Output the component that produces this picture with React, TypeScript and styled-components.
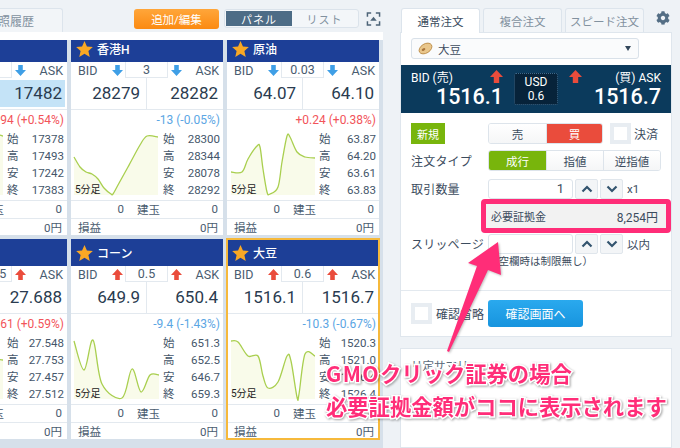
import React from 'react'
import styled,{createGlobalStyle} from 'styled-components'
import {FaCog} from 'react-icons/fa'

const FONT=`Roboto,"Noto Sans CJK JP",sans-serif`
const PINK='#ff2d78'
const TEXT='#34465a'
const LINE='#e3e9ef'
const RED='#ea4c3c'
const BLUE='#3f9fe6'
const GREEN='#78b50c'

type Pt=[number,number]

interface ICardData{
    name:string;
    dir:'up'|'down';
    spread:string;
    bid:string;
    ask:string;
    change:string;
    rising:boolean;
    ohlc:string[];
    points:Pt[];
    highlight?:boolean;
    selected?:boolean;
}

const CARDS:ICardData[]=[
    {name:'日本225',dir:'down',spread:'3',bid:'17479',ask:'17482',change:'+94 (+0.54%)',rising:true,ohlc:['17378','17493','17242','17383'],points:[[3,40],[30,50],[60,30],[80,6],[88,5]],highlight:true},
    {name:'香港H',dir:'down',spread:'3',bid:'28279',ask:'28282',change:'-13 (-0.05%)',rising:false,ohlc:['28300','28344','28078','28292'],points:[[3,26],[9,36],[15,41],[21,43],[27,48],[33,57],[40,63],[42,63],[47,54],[57,36],[69,14],[76,5],[87,6]]},
    {name:'原油',dir:'down',spread:'0.03',bid:'64.07',ask:'64.10',change:'+0.24 (+0.38%)',rising:true,ohlc:['63.87','64.20','63.61','63.83'],points:[[4,41],[15,41],[21,28],[30,15],[33,16],[36,38],[40,61],[43,63],[51,56],[55,31],[60,5],[63,6],[70,21],[78,26],[88,27]]},
    {name:'金',dir:'up',spread:'0.005',bid:'27.683',ask:'27.688',change:'+0.161 (+0.59%)',rising:true,ohlc:['27.548','27.753','27.457','27.512'],points:[[3,50],[30,45],[60,40],[80,26],[88,25]]},
    {name:'コーン',dir:'up',spread:'0.5',bid:'649.9',ask:'650.4',change:'-9.4 (-1.43%)',rising:false,ohlc:['651.3','652.5','646.7','659.3'],points:[[3,6],[13,35],[22,5],[31,49],[51,63],[61,34],[70,57],[79,40],[88,40]]},
    {name:'大豆',dir:'up',spread:'0.6',bid:'1516.1',ask:'1516.7',change:'-10.3 (-0.67%)',rising:false,ohlc:['1520.3','1521.0','1526.4','1526.4'],points:[[4,6],[11,7],[21,21],[31,21],[36,41],[41,53],[51,47],[60,21],[64,26],[70,62],[72,59],[78,19],[88,21]],selected:true},
]

const OHLC_LABELS=['始','高','安','終']

/**
 * turns chart points into a smooth svg path
 */
const smoothPath=(pts:Pt[]):string=>{
    let d=`M${pts[0][0]} ${pts[0][1]}`
    for(let i=0;i<pts.length-1;i++){
        const p0=pts[Math.max(i-1,0)]
        const p1=pts[i]
        const p2=pts[i+1]
        const p3=pts[Math.min(i+2,pts.length-1)]
        const c1x=p1[0]+(p2[0]-p0[0])/6
        const c1y=p1[1]+(p2[1]-p0[1])/6
        const c2x=p2[0]-(p3[0]-p1[0])/6
        const c2y=p2[1]-(p3[1]-p1[1])/6
        d+=` C${c1x} ${c1y} ${c2x} ${c2y} ${p2[0]} ${p2[1]}`
    }
    return d
}

const Global=createGlobalStyle`
html,body{margin:0;padding:0;background:#eef2f6;}
body{font-family:${FONT};color:${TEXT};}
*{box-sizing:border-box;}
svg{display:block;}
`

const Root=styled.div`
position:relative;
display:flex;
width:680px;
height:448px;
overflow:hidden;
background:#eef2f6;
`

const LeftColumn=styled.div`
display:flex;
flex-direction:column;
width:383px;
height:100%;
`

const Toolbar=styled.div`
display:flex;
align-items:flex-start;
height:32px;
padding-top:9px;
`

const HistoryTab=styled.div`
display:flex;
align-items:center;
justify-content:flex-end;
width:103px;
height:24px;
margin:-1px 0 0 -40px;
padding-right:28px;
font-size:12px;
color:#82919f;
white-space:nowrap;
background:#f2f5f8;
border:1px solid #dce4ec;
border-bottom:none;
border-radius:3px 3px 0 0;
`

const AddButton=styled.div`
display:flex;
align-items:center;
justify-content:center;
width:85px;
height:20px;
margin-left:71px;
font-size:11.5px;
color:#fff;
background:linear-gradient(#ffa63a,#fb8a12);
border-radius:3px;
`

const ViewToggle=styled.div`
display:flex;
width:135px;
height:19px;
margin-left:5px;
padding:1px;
background:#f3f6f9;
border:1px solid #dbe3eb;
border-radius:3px;
`

const ViewOption=styled.div<{$on?:boolean}>`
display:flex;
align-items:center;
justify-content:center;
flex:${({$on})=>$on?'0 0 66px':'1'};
font-size:11px;
letter-spacing:1px;
color:${({$on})=>$on?'#fff':'#82919f'};
background:${({$on})=>$on?'#4d6c86':'transparent'};
`

const ExpandIcon=styled.svg`
width:15px;
height:14px;
margin:3px 0 0 7px;
`

const WhiteStrip=styled.div`
height:8px;
background:#fff;
`

const CardPane=styled.div`
flex:1;
overflow:hidden;
background:#d6e0ea;
`

const CardGrid=styled.div`
display:grid;
grid-template-columns:repeat(3,152px);
grid-auto-rows:200px;
gap:4px;
margin:-5px 0 0 -85px;
`

const Card=styled.div<{$selected?:boolean}>`
display:flex;
flex-direction:column;
min-height:0;
background:#fff;
outline:${({$selected})=>$selected?'2px solid #f6b93b':'none'};
outline-offset:-1px;
`

const CardHeader=styled.div`
display:flex;
align-items:center;
gap:4px;
flex:0 0 27px;
padding-left:5px;
font-size:12px;
font-weight:500;
color:#fff;
background:#1d3f97;
`

const QuoteHead=styled.div`
display:grid;
grid-template-columns:31px 16px 43px 16px 1fr;
align-items:center;
flex:0 0 16px;
padding:0 4px 0 7px;
font-size:12.5px;
color:#4a5c70;
`

const ArrowSlot=styled.div`
display:flex;
justify-content:center;
`

const SpreadBox=styled.div`
height:16px;
font-size:12.5px;
line-height:15px;
text-align:center;
border:1px solid ${LINE};
border-top:none;
`

const AskLabel=styled.div`
text-align:right;
`

const PriceRow=styled.div`
display:grid;
grid-template-columns:76px 1fr;
flex:0 0 32px;
border-bottom:1px solid ${LINE};
`

const PriceCell=styled.div<{$lit?:boolean}>`
margin:2px 2px 2px 0;
padding-right:3px;
font-size:17px;
line-height:27px;
text-align:right;
color:#2a3b4f;
background:${({$lit})=>$lit?'#c4e3f7':'transparent'};
`

const PriceDivider=styled(PriceCell)`
margin:0;
padding-top:2px;
padding-right:6px;
border-right:1px solid ${LINE};
`

const ChartSection=styled.div`
display:flex;
flex-direction:column;
flex:0 0 91px;
padding:0 3px 0 0;
border-bottom:1px solid ${LINE};
`

const ChangeText=styled.div<{$rising:boolean}>`
flex:0 0 21px;
font-size:12px;
line-height:21px;
text-align:right;
white-space:nowrap;
color:${({$rising})=>$rising?'#f2545a':'#5ba6e4'};
`

const ChartBody=styled.div`
display:flex;
flex:1;
`

const ChartBox=styled.div`
position:relative;
flex:0 0 90px;
`

const TermLabel=styled.span`
position:absolute;
left:4px;
bottom:4px;
font-size:10px;
line-height:12px;
color:#222;
`

const OhlcList=styled.div`
flex:1;
padding-left:2px;
`

const OhlcRow=styled.div`
display:flex;
justify-content:space-between;
height:17px;
font-size:11.5px;
line-height:17px;
color:#44566a;
`

const FootRow=styled.div<{$tall?:boolean}>`
display:flex;
align-items:center;
justify-content:space-between;
flex:1;
padding:0 5px 0 7px;
font-size:11.5px;
color:#4a5c70;
border-bottom:${({$tall})=>$tall?'none':`1px solid ${LINE}`};
`

const PositionRow=styled(FootRow)`
display:grid;
grid-template-columns:46px 36px 1fr;
column-gap:0;
text-align:right;
`

const RightColumn=styled.div`
display:flex;
flex-direction:column;
width:272px;
margin-left:17px;
`

const TabBar=styled.div`
display:flex;
align-items:flex-end;
gap:3px;
height:32px;
padding-left:1px;
`

const OrderTab=styled.div<{$on?:boolean}>`
display:flex;
align-items:center;
justify-content:center;
width:79px;
height:${({$on})=>$on?'25px':'24px'};
font-size:11.5px;
white-space:nowrap;
color:${({$on})=>$on?'#3c4c5e':'#82919f'};
background:${({$on})=>$on?'#fff':'#f2f5f8'};
border:1px solid #dce4ec;
border-bottom:none;
border-radius:3px 3px 0 0;
margin-bottom:${({$on})=>$on?'-1px':'0'};
position:relative;
`

const GearSlot=styled.div`
align-self:flex-start;
margin:11px 0 0 9px;
font-size:14px;
line-height:14px;
color:#546e85;
`

const OrderPanel=styled.div`
display:flex;
flex-direction:column;
flex:0 0 305px;
background:#fff;
border:1px solid #dfe6ed;
`

const SelectBox=styled.div`
display:flex;
align-items:center;
gap:5px;
width:228px;
height:21px;
margin:5px 0 6px 10px;
padding:0 7px 0 6px;
font-size:11.5px;
color:#3c4c5e;
background:#fafbfc;
border:1px solid #d9e1e9;
border-radius:3px;
`

const SelectCaret=styled.span`
margin-left:auto;
width:0;
height:0;
border-left:3.5px solid transparent;
border-right:3.5px solid transparent;
border-top:5px solid #33475b;
`

const RateBand=styled.div`
display:grid;
grid-template-columns:1fr 44px 1fr;
gap:11px;
height:48px;
padding:3px 10px 0;
color:#fff;
background:#0b3a5c;
`

const RateSide=styled.div`
display:flex;
flex-direction:column;
`

const RateTop=styled.div`
display:flex;
align-items:center;
justify-content:space-between;
height:17px;
font-size:12px;
`

const RateValue=styled.div`
font-size:21.5px;
font-weight:500;
line-height:24px;
text-align:right;
`

const SpreadCard=styled.div`
display:flex;
flex-direction:column;
align-items:center;
justify-content:center;
height:32px;
margin-top:5px;
font-size:12px;
line-height:14px;
background:#07233a;
border:1px dotted #3e6a8c;
border-radius:2px;
`

const FormRow=styled.div<{$top:number}>`
display:flex;
align-items:center;
height:21px;
margin-top:${({$top})=>$top}px;
padding-left:10px;
font-size:12px;
color:#3c4c5e;
`

const RowLabel=styled.div`
flex:0 0 77px;
letter-spacing:.2px;
white-space:nowrap;
`

const NewBadge=styled.div`
display:flex;
align-items:center;
justify-content:center;
flex:0 0 34px;
height:21px;
margin-right:43px;
font-size:11px;
color:#fff;
background:${GREEN};
`

const Segments=styled.div`
display:flex;
height:21px;
border:1px solid #dde4eb;
border-radius:3px;
overflow:hidden;
`

const Segment=styled.div<{$width:number;$fill?:string}>`
display:flex;
align-items:center;
justify-content:center;
width:${({$width})=>$width}px;
font-size:11.5px;
color:${({$fill})=>$fill?'#fff':'#3c4c5e'};
background:${({$fill})=>$fill||'linear-gradient(#fff,#f5f6f7)'};
& + &{border-left:1px solid #dde4eb;}
`

const CheckBox=styled.div`
flex:0 0 21px;
height:21px;
margin:0 3px 0 7px;
background:#fff;
border:4px solid #e8edf2;
`

const FooterCheck=styled(CheckBox)`
margin:0 4px 0 0;
`

const NumberInput=styled.div`
flex:0 0 85px;
height:20px;
padding-right:8px;
font-size:13px;
line-height:18px;
text-align:right;
background:#fff;
border:1px solid #dde4eb;
border-radius:3px;
`

const StepButton=styled.div`
display:flex;
align-items:center;
justify-content:center;
flex:0 0 23px;
height:20px;
margin-left:2px;
background:#f3f5f7;
border:1px solid #e0e6ec;
border-radius:2px;
`

const UnitText=styled.span`
margin-left:4px;
font-size:11.5px;
`

const MarginHighlight=styled.div`
display:flex;
align-items:center;
justify-content:space-between;
width:190px;
height:34px;
margin:0 0 0 80px;
padding:0 8px 0 5px;
font-size:11px;
color:#3c4c5e;
background:#f2f2f2;
border:5px solid ${PINK};
border-radius:4px;
`

const MarginValue=styled.span`
font-size:12px;
`

const NoteText=styled.div`
height:14px;
margin:1px 0 0 87px;
font-size:10.5px;
line-height:14px;
color:#3c4c5e;
white-space:nowrap;
`

const PanelDivider=styled.div`
height:1px;
margin-top:21px;
background:${LINE};
`

const PanelFooter=styled.div`
display:flex;
align-items:center;
padding:9px 0 0 10px;
font-size:12px;
color:#3c4c5e;
`

const FooterLabel=styled.span`
flex:0 0 52px;
white-space:nowrap;
`

const ConfirmButton=styled.div`
display:flex;
align-items:center;
justify-content:center;
width:95px;
height:27px;
font-size:12px;
color:#fff;
background:linear-gradient(#2aa9ee,#1794de);
border-radius:3px;
`

const SummaryPanel=styled.div`
flex:1;
margin-top:11px;
padding:8px 10px;
font-size:11.5px;
color:#5a6a7a;
background:#fff;
border:1px solid #dfe6ed;
`

const ArrowOverlay=styled.svg`
position:absolute;
left:0;
top:0;
width:680px;
height:448px;
pointer-events:none;
filter:drop-shadow(1px 1px 1px rgba(0,0,0,.25));
`

const Annotation=styled.div`
position:absolute;
left:326px;
top:356px;
font-family:"Noto Sans CJK JP",sans-serif;
font-size:21.3px;
font-weight:700;
line-height:33px;
white-space:nowrap;
color:${PINK};
-webkit-text-stroke:3px #fff;
paint-order:stroke fill;
filter:drop-shadow(1px 1px 1px rgba(0,0,0,.35));
`

const Latin=styled.span`
letter-spacing:1.4px;
`

const DirArrow:React.FC<{dir:'up'|'down';size?:number}>=({dir,size=11})=>{
    const color=dir==='up'?RED:BLUE
    const d=dir==='up'?'M6 0 L12 6.5 H8.5 V12 H3.5 V6.5 H0 Z':'M3.5 0 H8.5 V5.5 H12 L6 12 L0 5.5 H3.5 Z'
    return <svg width={size} height={size} viewBox='0 0 12 12'><path d={d} fill={color} /></svg>
}

const Star:React.FC=()=>(
    <svg width={17} height={16} viewBox='0 0 24 23'>
        <path d='M12 0 L15.5 8 L24 8.8 L17.6 14.5 L19.5 23 L12 18.5 L4.5 23 L6.4 14.5 L0 8.8 L8.5 8 Z' fill='#f9a825' />
    </svg>
)

const Chevron:React.FC<{dir:'up'|'down'}>=({dir})=>(
    <svg width={12} height={8} viewBox='0 0 12 8'>
        <polyline points={dir==='up'?'1.5,6.5 6,2 10.5,6.5':'1.5,1.5 6,6 10.5,1.5'} fill='none' stroke='#33546e' strokeWidth={2.2} />
    </svg>
)

const Steppers:React.FC=()=>(
    <>
        <StepButton><Chevron dir='up' /></StepButton>
        <StepButton><Chevron dir='down' /></StepButton>
    </>
)

const Spark:React.FC<{points:Pt[]}>=({points})=>{
    const line=smoothPath(points)
    const first=points[0]
    const last=points[points.length-1]
    return (
        <svg width={90} height={69} viewBox='0 0 90 69'>
            <path d={`${line} L${last[0]} 64 L${first[0]} 64 Z`} fill='#f9fbea' />
            <path d={line} fill='none' stroke='#a9cf4f' strokeWidth={1.3} />
        </svg>
    )
}

const QuoteCard:React.FC<{data:ICardData}>=({data})=>(
    <Card $selected={data.selected}>
        <CardHeader><Star />{data.name}</CardHeader>
        <QuoteHead>
            <span>BID</span>
            <ArrowSlot><DirArrow dir={data.dir} /></ArrowSlot>
            <SpreadBox>{data.spread}</SpreadBox>
            <ArrowSlot><DirArrow dir={data.dir} /></ArrowSlot>
            <AskLabel>ASK</AskLabel>
        </QuoteHead>
        <PriceRow>
            <PriceDivider>{data.bid}</PriceDivider>
            <PriceCell $lit={data.highlight}>{data.ask}</PriceCell>
        </PriceRow>
        <ChartSection>
            <ChangeText $rising={data.rising}>{data.change}</ChangeText>
            <ChartBody>
                <ChartBox>
                    <Spark points={data.points} />
                    <TermLabel>5分足</TermLabel>
                </ChartBox>
                <OhlcList>
                    {OHLC_LABELS.map((label,i)=><OhlcRow key={label}><span>{label}</span><span>{data.ohlc[i]}</span></OhlcRow>)}
                </OhlcList>
            </ChartBody>
        </ChartSection>
        <PositionRow><span>0</span><span>建玉</span><span>0</span></PositionRow>
        <FootRow $tall><span>損益</span><span>0円</span></FootRow>
    </Card>
)

export default function App():React.ReactElement{
    return (
        <Root>
            <Global />
            <LeftColumn>
                <Toolbar>
                    <HistoryTab>注文参照履歴</HistoryTab>
                    <AddButton>追加/編集</AddButton>
                    <ViewToggle>
                        <ViewOption $on>パネル</ViewOption>
                        <ViewOption>リスト</ViewOption>
                    </ViewToggle>
                    <ExpandIcon viewBox='0 0 15 15'>
                        <path d='M1 5 V1 H5 M10 1 H14 V5 M14 10 V14 H10 M5 14 H1 V10' fill='none' stroke='#4d6478' strokeWidth={1.6} />
                        <path d='M7.5 5 L11 9.5 H4 Z' fill='#4d6478' />
                    </ExpandIcon>
                </Toolbar>
                <WhiteStrip />
                <CardPane>
                    <CardGrid>
                        {CARDS.map(card=><QuoteCard key={card.name} data={card} />)}
                    </CardGrid>
                </CardPane>
            </LeftColumn>
            <RightColumn>
                <TabBar>
                    <OrderTab $on>通常注文</OrderTab>
                    <OrderTab>複合注文</OrderTab>
                    <OrderTab>スピード注文</OrderTab>
                    <GearSlot><FaCog /></GearSlot>
                </TabBar>
                <OrderPanel>
                    <SelectBox>
                        <svg width={15} height={13} viewBox='0 0 15 13'>
                            <ellipse cx={7.5} cy={6.5} rx={7} ry={4.6} transform='rotate(-32 7.5 6.5)' fill='#e9c68b' stroke='#b98a45' strokeWidth={.8} />
                            <ellipse cx={5.5} cy={7.5} rx={2} ry={1.2} transform='rotate(-32 5.5 7.5)' fill='#a8743a' />
                        </svg>
                        大豆
                        <SelectCaret />
                    </SelectBox>
                    <RateBand>
                        <RateSide>
                            <RateTop><span>BID (売)</span><DirArrow dir='up' size={13} /></RateTop>
                            <RateValue>1516.1</RateValue>
                        </RateSide>
                        <SpreadCard><span>USD</span><span>0.6</span></SpreadCard>
                        <RateSide>
                            <RateTop><DirArrow dir='up' size={13} /><span>(買) ASK</span></RateTop>
                            <RateValue>1516.7</RateValue>
                        </RateSide>
                    </RateBand>
                    <FormRow $top={10}>
                        <NewBadge>新規</NewBadge>
                        <Segments>
                            <Segment $width={57}>売</Segment>
                            <Segment $width={56} $fill={RED}>買</Segment>
                        </Segments>
                        <CheckBox />
                        決済
                    </FormRow>
                    <FormRow $top={6}>
                        <RowLabel>注文タイプ</RowLabel>
                        <Segments>
                            <Segment $width={57} $fill={GREEN}>成行</Segment>
                            <Segment $width={57}>指値</Segment>
                            <Segment $width={57}>逆指値</Segment>
                        </Segments>
                    </FormRow>
                    <FormRow $top={7}>
                        <RowLabel>取引数量</RowLabel>
                        <NumberInput>1</NumberInput>
                        <Steppers />
                        <UnitText>x1</UnitText>
                    </FormRow>
                    <MarginHighlight><span>必要証拠金</span><MarginValue>8,254円</MarginValue></MarginHighlight>
                    <FormRow $top={0}>
                        <RowLabel>スリッページ</RowLabel>
                        <NumberInput />
                        <Steppers />
                        <UnitText>以内</UnitText>
                    </FormRow>
                    <NoteText>（空欄時は制限無し）</NoteText>
                    <PanelDivider />
                    <PanelFooter>
                        <FooterCheck />
                        <FooterLabel>確認省略</FooterLabel>
                        <ConfirmButton>確認画面へ</ConfirmButton>
                    </PanelFooter>
                </OrderPanel>
                <SummaryPanel>リ定サマリー</SummaryPanel>
            </RightColumn>
            <ArrowOverlay viewBox='0 0 680 448'>
                <polygon points='498,242 501,275 488,270 449,352 447,351 477,266 468,263' fill={PINK} />
            </ArrowOverlay>
            <Annotation>
                <Latin>GMO</Latin>クリック証券の場合<br />
                必要証拠金額がココに表示されます
            </Annotation>
        </Root>
    )
}
